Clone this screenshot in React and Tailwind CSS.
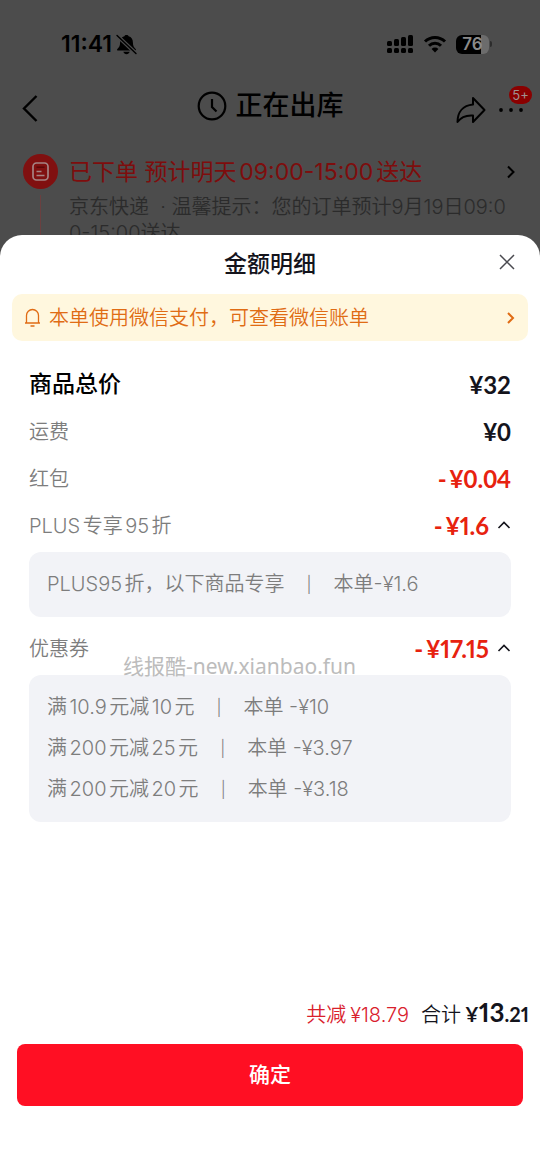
import React, { useState } from "react";

const FONT = "font-[Inter,'Noto_Sans_CJK_SC',sans-serif]";

const COUPONS = [
  { name: "满10.9元减10元", amount: "本单 -¥10" },
  { name: "满200元减25元", amount: "本单 -¥3.97" },
  { name: "满200元减20元", amount: "本单 -¥3.18" },
];

function StatusBar() {
  return (
    <div className="flex items-center justify-between h-16 pt-6 pl-[61px] pr-12">
      <div className="flex items-center gap-1">
        <span className="text-[23px] leading-8 font-semibold">11:41</span>
        <svg width="21" height="21" viewBox="0 0 20 20" fill="currentColor">
          <path d="M10 1C8.900 1 8.200 1.500 8 2.200 5.300 2.900 3.900 5 3.900 8c0 3.200-1 4.600-2.600 6.200-.6.6-.3 1.600.7 1.600h16c1 0 1.300-1 .7-1.600-1.600-1.600-2.600-3-2.600-6.200 0-3-1.400-5.100-4.100-5.800C11.800 1.500 11.100 1 10 1Z" />
          <path d="M7 17h6c-.4 1.300-1.600 2.200-3 2.200S7.400 18.300 7 17Z" />
          <path d="M.5 1 19.500 19" stroke="#4c4c4c" strokeWidth="3.600" />
          <path d="M1 1.500 19 18.500" stroke="currentColor" strokeWidth="1.400" strokeLinecap="round" />
        </svg>
      </div>
      <div className="flex items-center gap-[9px]">
        <svg width="27" height="20" viewBox="0 0 27 20" fill="currentColor">
          <rect x="0" y="7" width="5" height="5" rx="1.500" />
          <rect x="7" y="5" width="5" height="7" rx="1.500" />
          <rect x="14" y="3" width="5" height="9" rx="1.500" />
          <rect x="21" y="1" width="5" height="11" rx="1.500" />
          <rect x="0" y="14" width="5" height="5" rx="1.500" />
          <rect x="7" y="14" width="5" height="5" rx="1.500" />
          <rect x="14" y="14" width="5" height="5" rx="1.500" />
          <rect x="21" y="14" width="5" height="5" rx="1.500" />
        </svg>
        <svg width="24" height="18" viewBox="0 0 24 18" fill="none" stroke="currentColor" strokeWidth="3">
          <path d="M2 6.500a14.200 14.200 0 0 1 20 0" />
          <path d="M6 10.800a8.500 8.500 0 0 1 12 0" />
          <path d="M12 17.500 8.600 14a4.800 4.800 0 0 1 6.800 0Z" fill="currentColor" stroke="none" />
        </svg>
        <div className="flex items-center gap-px">
          <div className="flex items-center justify-center w-[33px] h-[19px] rounded-md bg-linear-to-r from-black from-76% to-[#6c6c6c] to-76% text-[17px] leading-none font-semibold text-[#8a8a8a]">
            76
          </div>
          <div className="w-[2px] h-[6px] rounded-r bg-[#2c2c2c]" />
        </div>
      </div>
    </div>
  );
}

function NavBar() {
  return (
    <div className="flex items-center justify-between h-[84px] px-4">
      <button aria-label="返回" className="w-[90px] pt-1">
        <svg width="24" height="28" viewBox="0 0 24 28" fill="none" stroke="currentColor" strokeWidth="2.400">
          <path d="M20.500 2 8 14.500 20.500 27" />
        </svg>
      </button>
      <h1 className="flex items-center gap-[9px] text-[27px] leading-9 font-medium">
        <svg width="30" height="30" viewBox="0 0 30 30" fill="none" stroke="currentColor" strokeWidth="2.200">
          <circle cx="15" cy="15" r="13.300" />
          <path d="M15 8v8l4.500 4.500" />
        </svg>
        正在出库
      </h1>
      <div className="flex items-center justify-end gap-3 w-[90px] pt-2">
        <button aria-label="分享">
          <svg width="30" height="28" viewBox="0 0 30 28" fill="none" stroke="currentColor" strokeWidth="2" strokeLinejoin="round">
            <path d="M17 2 28.500 14 17 26v-6.500C10 19 5 21 1.500 26 1.500 16 7 9.500 17 8.500Z" />
          </svg>
        </button>
        <button aria-label="更多" className="relative">
          <svg width="26" height="28" viewBox="0 0 26 28" fill="currentColor">
            <circle cx="3" cy="14" r="1.900" />
            <circle cx="13" cy="14" r="1.900" />
            <circle cx="23" cy="14" r="1.900" />
          </svg>
          <span className="absolute -top-[10px] left-[11px] w-[23px] h-[18px] rounded-full bg-[#8a0000] text-[13px] leading-[18px] text-[#a09090]">5+</span>
        </button>
      </div>
    </div>
  );
}

function OrderStatus() {
  return (
    <div className="flex gap-[11px] h-[107px] pt-[6px] px-[23px]">
      <div className="flex flex-col items-center gap-[6px]">
        <svg className="shrink-0" width="35" height="35" viewBox="0 0 35 35">
          <circle cx="17.500" cy="17.500" r="17.500" fill="#801010" />
          <rect x="10" y="9" width="15" height="17" rx="3.500" fill="none" stroke="#a58484" strokeWidth="1.700" />
          <path d="M13.500 17.500h5M13.500 21.500h8" stroke="#a58484" strokeWidth="1.500" />
          <path d="M13.500 13.200h8" stroke="#5c0808" strokeWidth="1.500" />
        </svg>
        <div className="w-px grow bg-[#6b4040]" />
      </div>
      <div className="grow">
        <div className="flex items-center justify-between h-9 text-[#7e0d0d]">
          <span className="text-[23px]">已下单 预计明天09:00-15:00送达</span>
          <svg width="12" height="14" viewBox="0 0 12 14" fill="none" stroke="#000" strokeWidth="2">
            <path d="m3 1.500 5.500 5.500L3 12.500" />
          </svg>
        </div>
        <p className="mt-1 text-[20px] leading-[26px] font-[350] text-[#2b2b2b] break-all [text-autospace:no-autospace]">
          京东快递&nbsp; · 温馨提示：您的订单预计9月19日09:00-15:00送达
        </p>
      </div>
    </div>
  );
}

function Caret() {
  return (
    <svg width="14" height="14" viewBox="0 0 14 14" fill="none" stroke="#14141c" strokeWidth="1.600">
      <path d="m1.500 9 5.500-5.500L12.500 9" />
    </svg>
  );
}

function Price({ value, off, narrow }) {
  return (
    <span className={`font-[Lato,sans-serif] text-[24px] font-bold ${off ? "text-[#e7220f]" : "text-[#14141c]"}`}>
      {off && <span className="mr-[3px]">-</span>}
      ¥<span className={narrow ? "proportional-nums" : ""}>{value}</span>
    </span>
  );
}

function Row({ label, bold, price, off }) {
  return (
    <div className="flex items-center justify-between h-[47px]">
      <span className={bold ? "text-[23px] font-medium text-black" : "text-[20px] font-[350] text-[#7d7d7d]"}>{label}</span>
      <Price value={price} off={off} />
    </div>
  );
}

function FoldRow({ label, price, open, onToggle }) {
  return (
    <button onClick={onToggle} aria-expanded={open} className="flex items-center justify-between w-full h-[47px]">
      <span className="text-[20px] font-[350] text-[#7d7d7d]">{label}</span>
      <span className="flex items-center gap-2">
        <Price value={price} off narrow />
        <Caret />
      </span>
    </button>
  );
}

function Detail({ name, amount }) {
  return (
    <li className="flex items-center">
      <span>{name}</span>
      <span className="w-[49px] text-center text-[16px]">|</span>
      <span>{amount}</span>
    </li>
  );
}

function DetailBox({ children }) {
  return (
    <ul className="mt-[3px] px-[18px] py-3 rounded-xl bg-[#f2f3f7] text-[20px] leading-[41px] font-[350] text-[#7d7d7d]">
      {children}
    </ul>
  );
}

export default function App() {
  const [plusOpen, setPlusOpen] = useState(true);
  const [couponOpen, setCouponOpen] = useState(true);

  return (
    <div className={`flex flex-col min-h-screen bg-[#4c4c4c] text-black [text-autospace:normal] ${FONT}`}>
      <StatusBar />
      <NavBar />
      <OrderStatus />

      <main className="relative -mt-5 flex flex-col grow rounded-t-[22px] bg-white">
        <header className="grid grid-cols-[1fr_auto_1fr] items-center h-[59px] px-6">
          <h2 className="col-start-2 text-[23px] font-medium text-[#14141c]">金额明细</h2>
          <button aria-label="关闭" className="justify-self-end pb-1.5">
            <svg width="18" height="18" viewBox="0 0 18 18" fill="none" stroke="#4a4a50" strokeWidth="1.500">
              <path d="m2 2 14 14M16 2 2 16" />
            </svg>
          </button>
        </header>

        <a href="#bill" className="flex items-center gap-2 mx-3 h-[47px] px-3 rounded-[10px] bg-[#fff7de] text-[20px] text-[#e06c14]">
          <svg width="17" height="20" viewBox="0 0 17 20" fill="none" stroke="currentColor" strokeWidth="1.300">
            <path d="M1 15h15M2.500 15V7.500a6 6 0 0 1 12 0V15M6.500 18h4" />
          </svg>
          <span className="grow font-[350]">本单使用微信支付，可查看微信账单</span>
          <svg width="10" height="14" viewBox="0 0 10 14" fill="none" stroke="currentColor" strokeWidth="2">
            <path d="m2 2 5 5-5 5" />
          </svg>
        </a>

        <section className="mt-5 px-[29px]">
          <Row label="商品总价" bold price="32" />
          <Row label="运费" price="0" />
          <Row label="红包" price="0.04" off />
          <FoldRow label="PLUS专享95折" price="1.6" open={plusOpen} onToggle={() => setPlusOpen(!plusOpen)} />
          {plusOpen && (
            <DetailBox>
              <Detail name="PLUS95折，以下商品专享" amount="本单-¥1.6" />
            </DetailBox>
          )}
          <div className="relative mt-2">
            <FoldRow label="优惠券" price="17.15" open={couponOpen} onToggle={() => setCouponOpen(!couponOpen)} />
            <span className="absolute left-[94px] top-[27px] text-[21px] leading-7 text-[#bcbcbc] whitespace-nowrap font-['Noto_Sans','Noto_Sans_CJK_SC',sans-serif]">
              线报酷-new.xianbao.fun
            </span>
          </div>
          {couponOpen && (
            <DetailBox>
              {COUPONS.map((c) => (
                <Detail key={c.name} name={c.name} amount={c.amount} />
              ))}
            </DetailBox>
          )}
        </section>

        <footer className="mt-auto px-[17px] pb-[68px]">
          <div className="flex items-baseline justify-end gap-3 -mr-[6px] h-[60px] pt-[9px] text-[20px] font-[350]">
            <span className="text-[#d9202c]">
              共减<span className="ml-1">¥18.79</span>
            </span>
            <span className="text-[#14141c]">
              合计
              <b className="ml-1 font-[Lato,sans-serif] font-bold proportional-nums">
                ¥<span className="text-[26px]">13</span>.21
              </b>
            </span>
          </div>
          <button className="w-full h-[62px] rounded-lg bg-[#ff0f23] text-[21px] font-medium text-white">确定</button>
        </footer>
      </main>
    </div>
  );
}
